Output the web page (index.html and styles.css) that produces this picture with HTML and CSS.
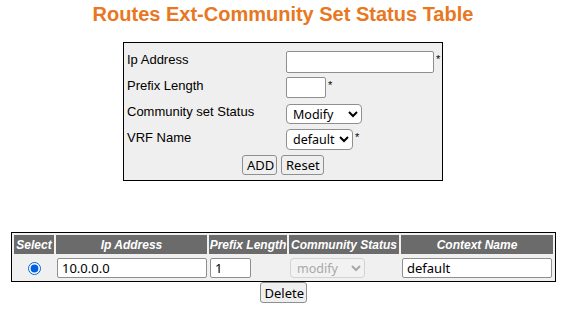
FILE: index.html
```html
<!DOCTYPE html>
<html lang="en">
<head>
  <meta charset="UTF-8" />
  <title>Routes Ext-Community Set Status Table</title>
  <link rel="stylesheet" href="styles.css">
</head>
<body>
  <h1 class="title">Routes Ext-Community Set Status Table</h1>

  <form class="entry-form">
    <div class="form-row">
      <label class="form-label">Ip Address</label>
      <div class="form-field"><input type="text" class="in-ip"><span class="req">*</span></div>
    </div>
    <div class="form-row">
      <label class="form-label">Prefix Length</label>
      <div class="form-field"><input type="text" class="in-prefix"><span class="req">*</span></div>
    </div>
    <div class="form-row">
      <label class="form-label">Community set Status</label>
      <div class="form-field">
        <select class="sel-status">
          <option>Modify</option>
          <option>Delete</option>
        </select>
      </div>
    </div>
    <div class="form-row">
      <label class="form-label">VRF Name</label>
      <div class="form-field">
        <select class="sel-vrf">
          <option>default</option>
        </select><span class="req">*</span>
      </div>
    </div>
    <div class="form-buttons">
      <button type="button" class="btn btn-add">ADD</button>
      <button type="reset" class="btn btn-reset">Reset</button>
    </div>
  </form>

  <table class="status-table">
    <tr>
      <th class="col-select">Select</th>
      <th class="col-ip">Ip Address</th>
      <th class="col-prefix">Prefix Length</th>
      <th class="col-status">Community Status</th>
      <th class="col-context">Context Name</th>
    </tr>
    <tr>
      <td class="cell-radio"><input type="radio" name="sel" checked></td>
      <td><input type="text" class="row-ip" value="10.0.0.0"></td>
      <td><input type="text" class="row-prefix" value="1"></td>
      <td>
        <select class="row-status" disabled>
          <option>modify</option>
        </select>
      </td>
      <td><input type="text" class="row-context" value="default"></td>
    </tr>
  </table>

  <div class="table-actions">
    <button type="button" class="btn btn-delete">Delete</button>
  </div>
</body>
</html>
```

FILE: styles.css
```css
body {
  margin: 0;
  padding: 0 6px 0 11px;
  font-family: 'Liberation Sans', Arial, sans-serif;
  font-size: 13px;
  color: #000;
  background: #fff;
}
.title {
  margin: 0;
  padding-top: 3px;
  font-size: 20px;
  line-height: 23px;
  font-weight: bold;
  text-align: center;
  color: #e87722;
}
input, select, button {
  font-family: 'Noto Sans', 'Open Sans', sans-serif;
  font-size: 13px;
  box-sizing: border-box;
  margin: 0;
}
input[type="text"] {
  border: 1px solid #8f8f8f;
  border-radius: 2px;
  padding: 0 4px;
  background: #fff;
  color: #000;
}
select {
  font-size: 12.5px;
  border: 1px solid #8f8f8f;
  border-radius: 4px;
  background: #fff;
  color: #000;
  padding: 0 0 0 2px;
}
.entry-form {
  width: 320px;
  box-sizing: border-box;
  margin: 16px auto 0;
  padding: 6px 0 1px 3px;
  border: 1px solid #000;
  background: #efefef;
}
.form-row {
  display: grid;
  grid-template-columns: 159px 1fr;
  height: 26px;
}
.form-label {
  line-height: 15px;
  padding-top: 3px;
}
.form-field {
  display: flex;
  align-items: flex-start;
  padding-top: 2px;
}
.req {
  font-size: 11px;
  line-height: 11px;
  margin-left: 2px;
  margin-top: 3px;
}
.in-ip {
  width: 148px;
  height: 22px;
}
.in-prefix {
  width: 40px;
  height: 21px;
}
.sel-status {
  width: 76px;
  height: 20px;
  margin-top: 1px;
}
.sel-vrf {
  width: 67px;
  height: 21px;
}
.form-buttons {
  display: flex;
  justify-content: center;
  gap: 4px;
  height: 26px;
  padding-top: 2px;
  box-sizing: border-box;
  margin-left: -3px;
}
.btn {
  height: 20px;
  padding: 0 4px;
  border: 1px solid #8f8f8f;
  border-radius: 3px;
  background: #efefef;
  color: #000;
  line-height: 16px;
}
.btn-add {
  width: 35px;
}
.btn-reset {
  width: 43px;
}
.status-table {
  width: 545px;
  margin: 51px auto 0;
  border: 1px solid #000;
  border-spacing: 2px;
  background: #f0f0f0;
  table-layout: fixed;
}
.status-table th {
  height: 19px;
  padding: 0;
  background: #6b6b6b;
  color: #fff;
  font-size: 12px;
  font-style: italic;
  font-weight: bold;
  text-align: center;
  white-space: nowrap;
  overflow: hidden;
}
.status-table td {
  height: 23px;
  padding: 0 1px;
  vertical-align: middle;
}
.col-select { width: 40px; }
.col-ip { width: 151px; }
.col-prefix { width: 78px; }
.col-status { width: 110px; }
.col-context { width: 152px; }
.cell-radio {
  text-align: center;
}
.cell-radio input {
  width: 13px;
  height: 13px;
  margin: 0;
  vertical-align: middle;
  accent-color: #0060df;
}
.row-ip {
  width: 150px;
  height: 20px;
}
.row-prefix {
  width: 41px;
  height: 20px;
}
.row-status {
  width: 75px;
  height: 20px;
  color: #8a8a8a;
  border-color: #c8c8c8;
  background: #f4f4f4;
}
.row-context {
  width: 150px;
  height: 20px;
}
.table-actions {
  display: flex;
  justify-content: center;
}
.btn-delete {
  width: 47px;
  height: 21px;
}
```
